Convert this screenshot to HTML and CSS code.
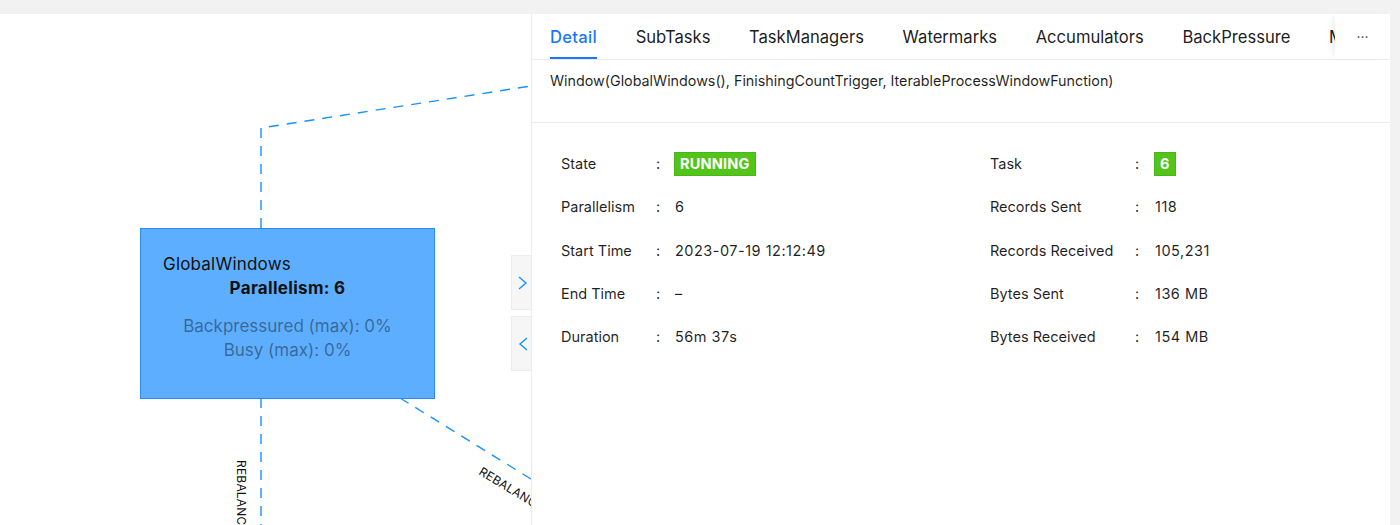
FILE: index.html
```html
<!DOCTYPE html>
<html>
<head>
<meta charset="utf-8">
<link rel="stylesheet" href="styles.css">
</head>
<body>
<div class="topbar"></div>
<div class="main">
  <div class="canvas">
    <svg class="edges" width="531" height="511" viewBox="0 14 531 511">
      <g fill="none" stroke="#1890ff" stroke-width="1.4" stroke-dasharray="10,8">
        <path d="M261 228 L261 128 L531 86"/>
        <path d="M261 398 L261 525"/>
        <path d="M400 398 L531 479"/>
      </g>
      <text class="edge-label" transform="translate(237 460) rotate(90)">REBALANCE</text>
      <text class="edge-label" transform="translate(478 474) rotate(31)">REBALANCE</text>
    </svg>
    <div class="node">
      <div class="node-title">GlobalWindows</div>
      <div class="node-par">Parallelism: 6</div>
      <div class="node-meta">Backpressured (max): 0%</div>
      <div class="node-meta">Busy (max): 0%</div>
    </div>
    <div class="toggles">
      <div class="toggle">
        <svg width="12" height="16" viewBox="0 0 12 16"><path d="M2 2 L9 8 L2 14" fill="none" stroke="#1890ff" stroke-width="1.4"/></svg>
      </div>
      <div class="toggle">
        <svg width="12" height="16" viewBox="0 0 12 16"><path d="M10 2 L3 8 L10 14" fill="none" stroke="#1890ff" stroke-width="1.4"/></svg>
      </div>
    </div>
  </div>
  <div class="panel">
    <div class="tabbar">
      <div class="tabs">
        <div class="tab active">Detail</div>
        <div class="tab">SubTasks</div>
        <div class="tab">TaskManagers</div>
        <div class="tab">Watermarks</div>
        <div class="tab">Accumulators</div>
        <div class="tab">BackPressure</div>
        <div class="tab">Metrics</div>
        <div class="tab">FlameGraph</div>
      </div>
      <div class="more">···</div>
    </div>
    <div class="name">Window(GlobalWindows(), FinishingCountTrigger, IterableProcessWindowFunction)</div>
    <div class="desc">
      <div class="lbl">State</div><div class="colon">:</div><div class="val"><span class="badge">RUNNING</span></div>
      <div class="lbl">Task</div><div class="colon">:</div><div class="val"><span class="badge">6</span></div>

      <div class="lbl">Parallelism</div><div class="colon">:</div><div class="val">6</div>
      <div class="lbl">Records Sent</div><div class="colon">:</div><div class="val">118</div>

      <div class="lbl">Start Time</div><div class="colon">:</div><div class="val">2023-07-19 12:12:49</div>
      <div class="lbl">Records Received</div><div class="colon">:</div><div class="val">105,231</div>

      <div class="lbl">End Time</div><div class="colon">:</div><div class="val">–</div>
      <div class="lbl">Bytes Sent</div><div class="colon">:</div><div class="val">136 MB</div>

      <div class="lbl">Duration</div><div class="colon">:</div><div class="val">56m 37s</div>
      <div class="lbl">Bytes Received</div><div class="colon">:</div><div class="val">154 MB</div>
    </div>
  </div>
  <div class="rightgap"></div>
</div>
</body>
</html>
```

FILE: styles.css
```css
* { box-sizing: border-box; }
html, body {
  margin: 0;
  padding: 0;
  width: 1400px;
  height: 525px;
  overflow: hidden;
  background: #fff;
  font-family: Inter, "Noto Sans", "Liberation Sans", sans-serif;
  color: rgba(0, 0, 0, 0.88);
}
.topbar {
  height: 14px;
  background: #f2f2f2;
}
.main {
  display: flex;
  height: 511px;
}
.canvas {
  position: relative;
  width: 531px;
  flex: none;
  overflow: hidden;
  background: #fff;
}
.edges {
  position: absolute;
  left: 0;
  top: 0;
}
.edge-label {
  font-family: Inter, "Liberation Sans", sans-serif;
  font-size: 12px;
  fill: #111;
  letter-spacing: 0.2px;
}
.node {
  position: absolute;
  left: 140px;
  top: 214px;
  width: 295px;
  height: 171px;
  background: #5eaeff;
  border: 1px solid #2a8cf3;
  padding: 23px 0 0 0;
  text-align: center;
  font-size: 17px;
  line-height: 24px;
}
.node-title {
  text-align: left;
  padding-left: 22px;
  color: #111;
  letter-spacing: 0.2px;
}
.node-par {
  font-weight: 700;
  color: #111;
  margin-bottom: 14px;
  letter-spacing: 0.3px;
}
.node-meta {
  color: rgba(0, 0, 0, 0.42);
}
.toggles {
  position: absolute;
  right: 0;
  top: 241px;
  display: flex;
  flex-direction: column;
  gap: 6px;
}
.toggle {
  width: 20px;
  height: 55px;
  background: #f6f6f6;
  border: 1px solid #ececec;
  border-right: none;
  display: flex;
  align-items: center;
  justify-content: center;
  padding-left: 2px;
}
.panel {
  width: 859px;
  flex: none;
  border-left: 1px solid #ebebeb;
  background: #fff;
}
.rightgap {
  flex: 1;
  background: #f2f2f2;
}
.tabbar {
  display: flex;
  height: 46px;
  border-bottom: 1px solid #ececec;
}
.tabs {
  flex: 1;
  display: flex;
  gap: 38.6px;
  padding-left: 18px;
  overflow: hidden;
  white-space: nowrap;
}
.tab {
  font-size: 16.6px;
  line-height: 47px;
  height: 45px;
  color: rgba(0, 0, 0, 0.9);
  flex: none;
}
.tab.active {
  color: #1677ff;
  font-weight: 500;
  letter-spacing: 0.3px;
  border-bottom: 2px solid #1677ff;
}
.more {
  width: 55px;
  flex: none;
  text-align: center;
  line-height: 46px;
  font-size: 14px;
  color: rgba(0, 0, 0, 0.8);
  box-shadow: -6px 0 8px -4px rgba(0, 0, 0, 0.08);
  background: #fff;
}
.name {
  height: 63px;
  border-bottom: 1px solid #ececec;
  padding: 11px 18px 0 18px;
  font-size: 14.3px;
  line-height: 20px;
  color: rgba(0, 0, 0, 0.88);
}
.desc {
  display: grid;
  grid-template-columns: 95px 19px 315px 145px 20px 1fr;
  grid-auto-rows: 43.25px;
  padding: 19px 0 0 29px;
  font-size: 14.5px;
  align-items: center;
}
.lbl {
  color: rgba(0, 0, 0, 0.88);
  white-space: nowrap;
}
.colon {
  color: rgba(0, 0, 0, 0.88);
}
.val {
  color: rgba(0, 0, 0, 0.88);
  letter-spacing: 0.5px;
}
.badge {
  display: inline-block;
  background: #52c41a;
  color: #fff;
  font-weight: 700;
  font-size: 14.5px;
  line-height: 22px;
  padding: 0 5px;
  border: 1px solid #49b614;
  margin-left: -1px;
  letter-spacing: 0.2px;
}
```
